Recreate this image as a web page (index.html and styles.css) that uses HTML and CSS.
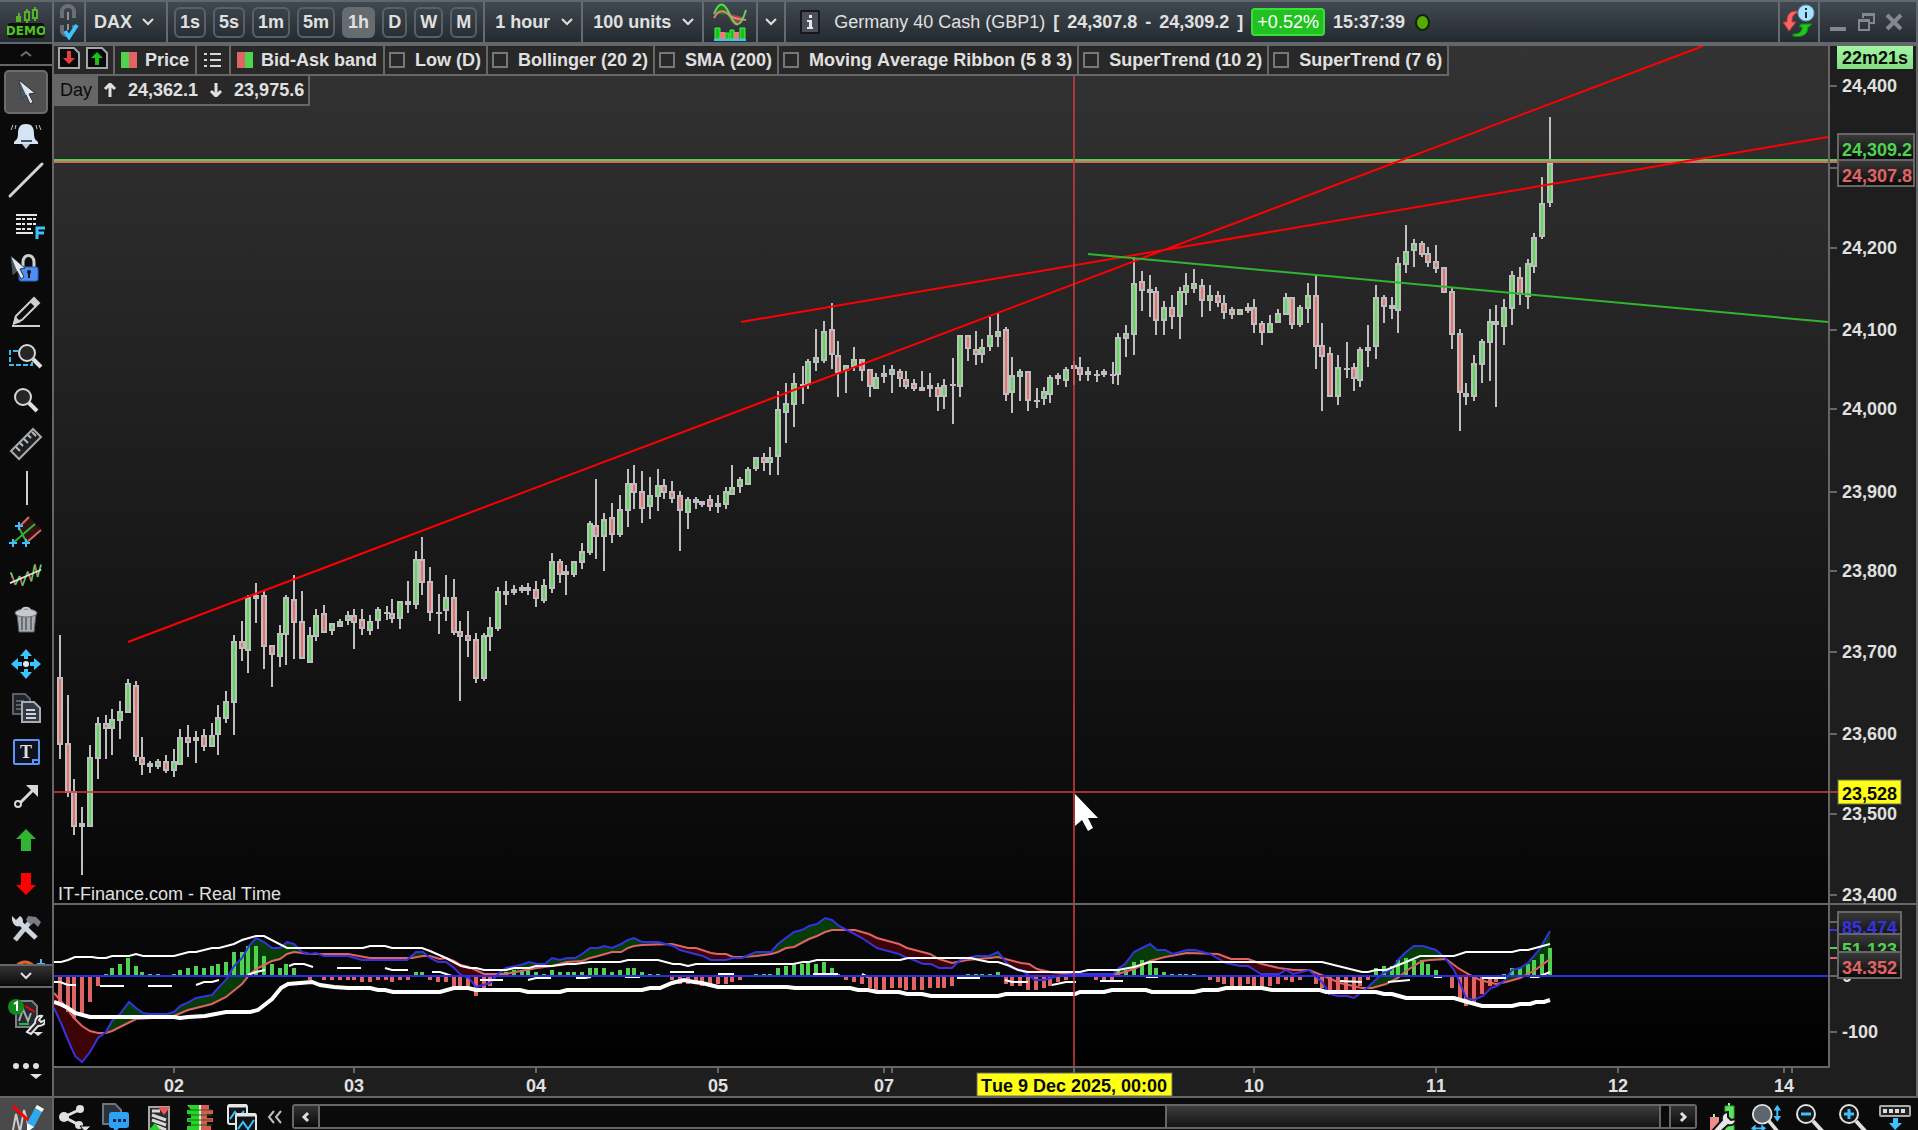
FILE: index.html
```html
<!DOCTYPE html>
<html lang="en">
  <head>
    <meta charset="UTF-8" />
    <meta name="viewport" content="width=device-width, initial-scale=1.0" />
    <title>DAX - 1 hour</title>
    <link rel="stylesheet" href="styles.css" />
  </head>
  <body>
    <!-- top bar -->
    <header class="topbar">
      <div class="cell cell-logo">
        <svg width="38" height="34" viewBox="0 0 38 34">
          <path d="M12 8v9M20 4v14M28 2v14" stroke="#56b22c" stroke-width="2" />
          <path d="M9 11h5v6h-5z" fill="#56b22c" />
          <path d="M18 7h4v8h-4zM26 5h4v8h-4z" fill="#26351c" stroke="#56b22c" stroke-width="2" />
          <rect x="1" y="18" width="36" height="15" rx="2" fill="#0a1406" />
          <text class="logo-text" x="19" y="30" text-anchor="middle">DEMO</text>
        </svg>
      </div>
      <button type="button" class="cell cell-link" aria-label="Link charts">
        <svg width="22" height="36" viewBox="0 0 22 36" fill="none">
          <path d="M4 14V7a6 5 0 0 1 12 0v7M4 21v5a6 5 0 0 0 8 5M16 21v3" stroke="#6a7076" stroke-width="4" />
          <path d="M10 8v8M10 20v6" stroke="#8d9296" stroke-width="2" />
          <path d="M7 27l4 6 8-12" stroke="#3cc3ff" stroke-width="4" />
        </svg>
      </button>
      <button type="button" class="cell cell-symbol">DAX
        <svg class="chevron" width="12" height="8" viewBox="0 0 12 8"><path d="M1 1l5 5 5-5" /></svg>
      </button>
      <div class="cell timeframes">
        <button type="button" class="tf">1s</button>
        <button type="button" class="tf">5s</button>
        <button type="button" class="tf">1m</button>
        <button type="button" class="tf">5m</button>
        <button type="button" class="tf active">1h</button>
        <button type="button" class="tf">D</button>
        <button type="button" class="tf">W</button>
        <button type="button" class="tf">M</button>
      </div>
      <label class="cell cell-select">
        <select aria-label="Timeframe"><option>1 hour</option></select>
        <svg class="chevron" width="12" height="8" viewBox="0 0 12 8"><path d="M1 1l5 5 5-5" /></svg>
      </label>
      <label class="cell cell-select">
        <select aria-label="Units"><option>100 units</option></select>
        <svg class="chevron" width="12" height="8" viewBox="0 0 12 8"><path d="M1 1l5 5 5-5" /></svg>
      </label>
      <button type="button" class="cell cell-indicators" aria-label="Indicators">
        <svg width="34" height="40" viewBox="0 0 34 40" fill="none">
          <path d="M1 14C6-2 10-1 16 9L11 13 1 11z" fill="#1d7a1d" />
          <path d="M14 11l16 4C26 28 20 26 14 11z" fill="#9c4545" />
          <path d="M1 16C6 6 12 9 16 13s10 4 17 5" stroke="#f07b7b" stroke-width="2" />
          <path d="M1 12C6-1 11 0 16 11s10 20 17-3" stroke="#5fd75f" stroke-width="2" />
          <path d="M2 26h5v11H2zM12 31h4v6h-4zM17 28h4v9h-4zM27 26h5v11h-5z" fill="#19c219" stroke="#4df04d" />
          <path d="M7 30h5v7H7zM21 30h5v7h-5z" fill="#f07b7b" />
          <path d="M1 38h32" stroke="#3cc3ff" stroke-width="2" />
        </svg>
      </button>
      <button type="button" class="cell cell-more" aria-label="More indicators">
        <svg class="chevron" width="12" height="8" viewBox="0 0 12 8"><path d="M1 1l5 5 5-5" /></svg>
      </button>
      <div class="cell instrument">
        <svg width="20" height="24" viewBox="0 0 20 24">
          <rect x="1" y="1" width="18" height="22" rx="1" fill="#4b4d59" stroke="#15171a" stroke-width="2" />
          <path d="M9 5h3v3H9zM7 10h5v7h1v2H7v-2h2v-5H7z" fill="#e6e6e6" />
        </svg>
        <span class="name">Germany 40 Cash (GBP1)</span>
        <span class="quote"><span>[</span><span>24,307.8</span><span>-</span><span>24,309.2</span><span>]</span></span>
        <span class="change">+0.52%</span>
        <span class="clock">15:37:39</span>
        <span class="status"></span>
      </div>
      <button type="button" class="cell cell-sync" aria-label="Orders">
        <svg width="34" height="38" viewBox="0 0 34 38">
          <path d="M15 8C7 8 5 12 5 19H1l6 9 7-9h-4c0-5 1-8 5-9z" fill="#ff6464" stroke="#c23a3a" />
          <path d="M19 21h11l-3 3h-1c0 7-5 11-15 9v-2c6 0 9-2 9-7h-3z" fill="#1ec61e" stroke="#118a11" />
          <circle cx="24" cy="10" r="8" fill="#a9e2ff" stroke="#5fa6cc" />
          <path d="M23 5h2v2h-2zM23 9h2v6h-2z" fill="#18303c" />
        </svg>
      </button>
      <div class="cell window-buttons">
        <button type="button" aria-label="Minimize">
          <svg width="18" height="20" viewBox="0 0 18 20"><path d="M1 17h16" stroke-width="4" /></svg>
        </button>
        <button type="button" aria-label="Restore">
          <svg width="18" height="20" viewBox="0 0 18 20"><path d="M6 6V2h11v9h-5M2 8h10v10H2zM2 9h10M6 3h11" stroke-width="2" /></svg>
        </button>
        <button type="button" aria-label="Close">
          <svg width="18" height="20" viewBox="0 0 18 20"><path d="M2 3l14 14M16 3L2 17" stroke-width="4" /></svg>
        </button>
      </div>
    </header>

    <main class="main">
      <!-- drawing tools -->
      <nav class="sidebar">
        <button type="button" class="tools-up" aria-label="Scroll up">
          <svg width="12" height="8" viewBox="0 0 12 8" fill="none"><path d="M1 6l5-4 5 4" stroke="#6e6e6e" stroke-width="2" /></svg>
        </button>
        <div class="tools">
          <button type="button" class="tool selected" aria-label="Pointer">
            <svg viewBox="0 0 32 32"><path d="M9 4l3 19 4-4 4 9 3-2-4-8 6-1z" fill="#dfe6ee" stroke="#27303a" /><path d="M9 4l3 19 4-4z" fill="#4a5560" /></svg>
          </button>
          <button type="button" class="tool" aria-label="Alert">
            <svg viewBox="0 0 32 32"><path d="M16 4c7 0 8 5 8 10s2 6 4 8v2H4v-2c2-2 4-3 4-8s1-10 8-10z" fill="#d5e4f5" /><path d="M12 24h8l-4 5z" fill="#b8c9dc" /><path d="M11 21h11" stroke="#44505c" stroke-width="2" /><path d="M3 5L1 10M6 5L5 9M29 5l2 5M26 5l1 4" stroke="#c4c4c4" /></svg>
          </button>
          <button type="button" class="tool" aria-label="Line">
            <svg viewBox="0 0 32 32"><path d="M0 32L32 0" stroke="#d2d2d2" stroke-width="3" stroke-linecap="round" /></svg>
          </button>
          <button type="button" class="tool" aria-label="Fibonacci">
            <svg viewBox="0 0 32 32"><path d="M6 7h21M6 25h17" stroke="#e6e6e6" stroke-width="2" /><path d="M6 11h21M6 16h21M6 21h15" stroke="#e6e6e6" stroke-width="2" stroke-dasharray="5 1 3 2" /><path d="M27 31V20h8M27 25h7" stroke="#3cc3ff" stroke-width="3" fill="none" /></svg>
          </button>
          <button type="button" class="tool" aria-label="Lock">
            <svg viewBox="0 0 32 32"><path d="M13 16v-6a5 6 0 0 1 11 0v6" fill="none" stroke="#cfcfcf" stroke-width="3" /><rect x="9" y="15" width="19" height="14" rx="2" fill="#4f8df5" stroke="#2b62c4" /><circle cx="19" cy="20" r="2" fill="#111" /><path d="M18 20h2v6h-2z" fill="#111" /><path d="M1 4l2 19 4-4 4 8 3-2-4-8 5-1z" fill="#dfe6ee" stroke="#27303a" /><path d="M1 4l2 19 4-4z" fill="#4a5560" /></svg>
          </button>
          <button type="button" class="tool" aria-label="Draw">
            <svg viewBox="0 0 32 32"><path d="M6 20L24 2l5 5-17 17-8 3z" fill="#0b0b0b" stroke="#cfcfcf" stroke-width="2" /><path d="M24 2l5 5-4 4-5-5zM5 20l6 6-8 3z" fill="#cfcfcf" /><path d="M2 30h28" stroke="#cfcfcf" stroke-width="2" /></svg>
          </button>
          <button type="button" class="tool" aria-label="Zoom area">
            <svg viewBox="0 0 32 32"><path d="M8 11H0v14h22v-4" fill="none" stroke="#3cb9ee" stroke-width="2" stroke-dasharray="5 2" /><path d="M23 19l8 8" stroke="#e0e0e0" stroke-width="4" /><circle cx="17" cy="13" r="8" fill="#262626" stroke="#d8d8d8" stroke-width="2" /></svg>
          </button>
          <button type="button" class="tool" aria-label="Zoom">
            <svg viewBox="0 0 32 32"><path d="M19 19l8 8" stroke="#e0e0e0" stroke-width="4" /><circle cx="13" cy="13" r="8" fill="#262626" stroke="#d8d8d8" stroke-width="2" /></svg>
          </button>
          <button type="button" class="tool" aria-label="Ruler">
            <svg viewBox="0 0 32 32"><path d="M1 23L23 1l8 8L9 31z" fill="#1b1f23" stroke="#aaa" stroke-width="2" /><path d="M6 19l4 4M10 15l3 3M14 11l4 4M18 7l3 3M22 4l4 4" stroke="#bbb" stroke-width="2" /></svg>
          </button>
          <button type="button" class="tool" aria-label="Vertical line">
            <svg viewBox="0 0 32 32"><path d="M17-1v34" stroke="#cfcfcf" stroke-width="2" /></svg>
          </button>
          <button type="button" class="tool" aria-label="Channel">
            <svg viewBox="0 0 32 32"><path d="M8 10L19 1l12 12-15 14z" fill="#301212" /><path d="M9 11L19 1M16 27l15-13" stroke="#e06464" stroke-width="2" /><path d="M3 27L25 8M9 12l8 15" stroke="#2fb52f" stroke-width="2" /><path d="M9 6v8M5 10h8M3 23v8M-1 27h8M16 23v8M12 27h8" stroke="#3cc3ff" stroke-width="2" /></svg>
          </button>
          <button type="button" class="tool" aria-label="Regression">
            <svg viewBox="0 0 36 36" fill="none"><path d="M1 14l5 14M11 18l3 11M20 13l4 11M28 5l3 14" stroke="#e06464" stroke-width="2" /><path d="M1 14l2 6M6 28l5-10M14 29l6-16M24 24l4-19M31 19l4-14" stroke="#4fd24f" stroke-width="2" /><path d="M0 26L35 11" stroke="#dedede" stroke-width="2" /></svg>
          </button>
          <button type="button" class="tool" aria-label="Delete">
            <svg viewBox="0 0 32 32"><path d="M7 10h19l-2 18H9z" fill="#a9adb2" stroke="#5a5e63" /><path d="M12 12v14M16 12v14M21 12v14" stroke="#6b7075" stroke-width="2" /><ellipse cx="16" cy="9" rx="11" ry="4" fill="#c6c9cd" stroke="#6b7075" /><path d="M12 6c1-3 7-3 8 0" fill="none" stroke="#c6c9cd" stroke-width="2" /></svg>
          </button>
          <button type="button" class="tool" aria-label="Move">
            <svg viewBox="0 0 32 32"><path d="M16 1l6 7h-4v3h-4V8h-4zM16 31l6-7h-4v-3h-4v3h-4zM1 16l7-6v4h4v4H8v4zM31 16l-7-6v4h-4v4h4v4z" fill="#3cc3ff" /><circle cx="16" cy="16" r="3" fill="#e6e6e6" /></svg>
          </button>
          <button type="button" class="tool" aria-label="Copy">
            <svg viewBox="0 0 32 32"><path d="M3 2h12l5 5v15H3z" fill="#20242a" stroke="#5b6066" stroke-width="2" /><path d="M6 9h8M6 13h5M6 17h5" stroke="#5b6066" stroke-width="2" /><path d="M12 10h12l6 6v14H12z" fill="#343b44" stroke="#a6adb5" stroke-width="2" /><path d="M16 18h9M16 22h10M16 26h10" stroke="#d0d4d8" stroke-width="2" /></svg>
          </button>
          <button type="button" class="tool" aria-label="Text">
            <svg viewBox="0 0 32 32"><rect x="4" y="4" width="25" height="24" rx="1" fill="#0d1220" stroke="#5f93f5" stroke-width="2" /><path d="M23 28v-4h5" fill="none" stroke="#5f93f5" stroke-width="2" /><text class="icon-t" x="16" y="22" text-anchor="middle">T</text></svg>
          </button>
          <button type="button" class="tool" aria-label="Arrow line">
            <svg viewBox="0 0 32 32"><path d="M10 23L24 9" stroke="#d8d8d8" stroke-width="3" /><path d="M16 5h12v12z" fill="#d8d8d8" /><circle cx="8" cy="24" r="3" fill="none" stroke="#d8d8d8" stroke-width="2" /></svg>
          </button>
          <button type="button" class="tool" aria-label="Up arrow">
            <svg viewBox="0 0 32 32"><path d="M16 5l10 10h-5v12H11V15H6z" fill="#2fb52f" /></svg>
          </button>
          <button type="button" class="tool" aria-label="Down arrow">
            <svg viewBox="0 0 32 32"><path d="M16 27l10-10h-5V5H11v12H6z" fill="#f00" /></svg>
          </button>
          <button type="button" class="tool" aria-label="Settings">
            <svg viewBox="0 0 32 32"><path d="M20 10L5 28" stroke="#c9ccd0" stroke-width="5" /><path d="M18 4l8 1 5 5-3 5-4-4-3 2-5-5z" fill="#787e84" /><path d="M8 9l18 17" stroke="#cfd8e2" stroke-width="5" /><path d="M2 4l4 4 4-4c4 2 4 8 0 10S1 11 2 4z" fill="#cfd8e2" /></svg>
          </button>
          <button type="button" class="tool" aria-label="Cycle">
            <svg viewBox="0 0 32 32" fill="none"><circle cx="15" cy="17" r="11" stroke="#e0662e" stroke-width="3" /><path d="M31 3v10M27 8h8" stroke="#3cc3ff" stroke-width="2" /></svg>
          </button>
        </div>
        <button type="button" class="tools-down" aria-label="Scroll down">
          <svg class="chevron" width="12" height="8" viewBox="0 0 12 8"><path d="M1 1l5 5 5-5" /></svg>
        </button>
        <button type="button" class="side-extra" aria-label="Templates">
          <svg width="38" height="38" viewBox="0 0 38 38"><path d="M9 3h16l5 5v21H9z" fill="#242a31" stroke="#7b8188" stroke-width="2" /><path d="M12 23l4-12 5 12 3-8" fill="none" stroke="#aaa" stroke-width="2" /><path d="M18 8l10 6" stroke="#f00" stroke-width="2" /><path d="M12 26h10" stroke="#2fb52f" stroke-width="2" /><path d="M20 34l8-9c0-5 3-8 7-7l-3 4 2 2 4-2c1 4-3 6-7 6l-7 8z" fill="#222" stroke="#e6e6e6" stroke-width="2" /><circle cx="9" cy="9" r="8" fill="#11891b" /><path d="M7 6l3-2v9" fill="none" stroke="#fff" stroke-width="2" /><path d="M26 34h10l-5 4z" fill="#e0e0e0" /></svg>
        </button>
        <button type="button" class="side-extra side-dots" aria-label="More tools">
          <svg width="32" height="20" viewBox="0 0 32 20" fill="#e0e0e0"><circle cx="6" cy="5" r="3" /><circle cx="16" cy="5" r="3" /><circle cx="26" cy="5" r="3" /><path d="M20 13h12l-6 5z" /></svg>
        </button>
      </nav>

      <!-- chart -->
      <section class="chart-panel">
        <div class="legend">
          <div class="chips">
            <div class="chip chip-orders">
              <button type="button" aria-label="Sell">
                <svg width="22" height="22" viewBox="0 0 22 22"><path d="M1 1h15l5 5v15H1z" fill="#0a0a0a" stroke="#a2a7ad" stroke-width="2" /><path d="M9 4h4v7h4l-6 6-6-6h4z" fill="#ee3b3b" /></svg>
              </button>
              <button type="button" aria-label="Buy">
                <svg width="22" height="22" viewBox="0 0 22 22"><path d="M1 1h15l5 5v15H1z" fill="#0a0a0a" stroke="#a2a7ad" stroke-width="2" /><path d="M9 18h4v-7h4l-6-6-6 6h4z" fill="#19c219" /></svg>
              </button>
            </div>
            <div class="chip"><span class="swatch"></span>Price</div>
            <button type="button" class="chip" aria-label="List">
              <svg width="20" height="16" viewBox="0 0 20 16"><path d="M1 2h3M1 8h3M1 14h3M7 2h11M7 8h11M7 14h11" stroke="#d8d8d8" stroke-width="2" /></svg>
            </button>
            <div class="chip"><span class="swatch swatch-reverse"></span>Bid-Ask band</div>
            <label class="chip chip-check"><input type="checkbox" />Low (D)</label>
            <label class="chip chip-check"><input type="checkbox" />Bollinger (20 2)</label>
            <label class="chip chip-check"><input type="checkbox" />SMA (200)</label>
            <label class="chip chip-check"><input type="checkbox" />Moving Average Ribbon (5 8 3)</label>
            <label class="chip chip-check"><input type="checkbox" />SuperTrend (10 2)</label>
            <label class="chip chip-check"><input type="checkbox" />SuperTrend (7 6)</label>
          </div>
          <div class="day-range">
            <span class="day">Day</span>
            <svg width="14" height="14" viewBox="0 0 14 14" fill="none"><path d="M7 14V2M2 6l5-5 5 5" /></svg>
            <span>24,362.1</span>
            <svg width="14" height="14" viewBox="0 0 14 14" fill="none"><path d="M7 0v12M2 8l5 5 5-5" /></svg>
            <span>23,975.6</span>
          </div>
        </div>

        <svg class="chart" viewBox="54 46 1862 1050" preserveAspectRatio="none">
          <defs>
            <linearGradient id="price-bg" x1="0" y1="0" x2="0" y2="1"><stop offset="0" stop-color="#333" /><stop offset="1" stop-color="#060606" /></linearGradient>
            <linearGradient id="macd-bg" x1="0" y1="0" x2="0" y2="1"><stop offset="0" stop-color="#0a0a0a" /><stop offset="1" stop-color="#000" /></linearGradient>
            <linearGradient id="tag-bg" x1="0" y1="0" x2="0" y2="1"><stop offset="0" stop-color="#3a3a3a" /><stop offset="1" stop-color="#080808" /></linearGradient>
            <linearGradient id="timer-bg" x1="0" y1="0" x2="0" y2="1"><stop offset="0" stop-color="#a2f8a2" /><stop offset="1" stop-color="#82dc82" /></linearGradient>
            <clipPath id="tag-1"><rect x="1836" y="910" width="68" height="23" /></clipPath>
            <clipPath id="tag-2"><rect x="1836" y="933" width="68" height="18" /></clipPath>
          </defs>

          <rect x="54" y="46" width="1862" height="1050" fill="#1e1e1e" />
          <rect x="54" y="46" width="1774" height="857" fill="url(#price-bg)" />
          <rect x="54" y="905" width="1774" height="161" fill="url(#macd-bg)" />

          <g id="candles" shape-rendering="crispEdges"></g>

          <!-- bid / ask -->
          <path class="ask" d="M54 160H1838" />
          <path class="bid" d="M54 162H1838" />

          <!-- trend lines -->
          <path class="trend" d="M128 642L1703 46M741 322L1828 137" />
          <path class="trend trend-green" d="M1088 254L1828 322" />

          <text class="credit" x="58" y="900">IT-Finance.com - Real Time</text>

          <g id="macd"></g>

          <!-- crosshair -->
          <path class="crosshair" d="M54 792H1838M1074 76V1066" />

          <!-- frames -->
          <path class="frame" d="M54 904H1916M54 1067H1830M1829 46V1067" />
          <g id="axis"></g>

          <!-- value tags -->
          <rect x="1837" y="46" width="76" height="23" fill="url(#timer-bg)" />
          <text class="tag dark" x="1842" y="64">22m21s</text>
          <rect class="tag-box" x="1838" y="134" width="76" height="26" />
          <text class="tag ask-text" x="1842" y="156">24,309.2</text>
          <rect class="tag-box" x="1838" y="160" width="76" height="26" />
          <text class="tag bid-text" x="1842" y="182">24,307.8</text>
          <rect class="tag-yellow" x="1838" y="780" width="63" height="24" />
          <text class="tag dark" x="1842" y="800">23,528</text>

          <g clip-path="url(#tag-1)">
            <rect class="tag-box" x="1838" y="912" width="63" height="28" />
            <text class="tag macd-text" x="1842" y="934">85.474</text>
          </g>
          <g clip-path="url(#tag-2)">
            <rect class="tag-box" x="1838" y="934" width="63" height="28" />
            <text class="tag ask-text" x="1842" y="956">51.123</text>
          </g>
          <rect class="tag-box" x="1838" y="952" width="63" height="26" />
          <text class="tag bid-text" x="1842" y="974">34.352</text>

          <rect class="tag-yellow" x="977" y="1073" width="195" height="23" />
          <text class="tag dark" x="1074" y="1092" text-anchor="middle">Tue 9 Dec 2025, 00:00</text>

          <path d="M1075 794v32l7-6 6 11 5-3-5-10h10z" fill="#fff" />
        </svg>
      </section>
    </main>

    <!-- bottom bar -->
    <footer class="bottombar">
      <button type="button" class="draw-mode" aria-label="Drawing mode">
        <svg viewBox="0 0 32 32"><path d="M3 28l3-16 4 18 4-22 4 14" fill="none" stroke="#ccc" stroke-width="2" /><path d="M3 4l18 17" stroke="#f00" stroke-width="3" /><path d="M3 30h12" stroke="#2fb52f" stroke-width="2" /><path d="M17 21l8-15 7 4-8 15-7 5z" fill="#2fa8ee" /><path d="M25 6l2-3 7 4-2 3zM17 21l7 4-7 5z" fill="#fff" /></svg>
      </button>
      <div class="bottom-tools">
        <button type="button" aria-label="Share">
          <svg viewBox="0 0 32 32"><path d="M23 7L6 15l17 9" fill="none" stroke="#e0e0e0" stroke-width="3" /><circle cx="22" cy="7" r="4" fill="#e0e0e0" /><circle cx="6" cy="15" r="5" fill="#e0e0e0" /><circle cx="21" cy="23" r="4" fill="#e0e0e0" /><path d="M22 24h11l-6 6z" fill="#e0e0e0" stroke="#0a0a0a" /></svg>
        </button>
        <button type="button" aria-label="Chat">
          <svg viewBox="0 0 32 32"><path d="M3 2h12l6 6v14H3z" fill="#2b323a" stroke="#6d747b" stroke-width="2" /><rect x="9" y="10" width="20" height="16" rx="3" fill="#2fa0f5" /><path d="M13 25h7l-5 5z" fill="#2fa0f5" /><path d="M13 17h3v3h-3zM18 17h3v3h-3zM23 17h3v3h-3z" fill="#0b2a44" /></svg>
        </button>
        <button type="button" aria-label="Order list">
          <svg viewBox="0 0 32 32"><rect x="7" y="5" width="20" height="26" fill="#2b2b2b" stroke="#a6a6a6" stroke-width="2" /><path d="M10 9h8M10 13l14 5M10 18l14 5M14 24l10 4" stroke="#d8d8d8" stroke-width="3" /><path d="M16 5h12l-6 8z" fill="#ee5a5a" /><path d="M6 29l7-8 6 8z" fill="#2bd12b" /></svg>
        </button>
        <button type="button" aria-label="Order book">
          <svg viewBox="0 0 32 32"><path d="M3 3h14v26H3v-5h4v-4H3v-4h4v-4H3V8h4z" fill="#2bd12b" /><path d="M17 3h8v5h4v4h-6v4h6v4h-6v4h4v5H17z" fill="#e25555" /><path d="M16 3v26" stroke="#d9f5d9" stroke-width="2" /><path d="M4 8h24M4 13h24M4 18h24M4 23h24" stroke="#147014" /></svg>
        </button>
        <button type="button" aria-label="Windows">
          <svg viewBox="0 0 32 32"><rect x="2" y="3" width="19" height="19" rx="2" fill="#10151a" stroke="#e6e6e6" stroke-width="2" /><path d="M2 4h19" stroke="#e6e6e6" stroke-width="3" /><path d="M4 17l5-7 4 5 5-6" fill="none" stroke="#3cc3ff" stroke-width="2" /><rect x="10" y="12" width="20" height="18" rx="2" fill="#10151a" stroke="#e6e6e6" stroke-width="2" /><path d="M10 13h20" stroke="#e6e6e6" stroke-width="3" /><path d="M12 27l5-7 5 7 6-9" fill="none" stroke="#3cc3ff" stroke-width="2" /></svg>
        </button>
      </div>
      <button type="button" class="collapse" aria-label="Collapse">
        <svg width="14" height="14" viewBox="0 0 14 14" fill="none"><path d="M6 1L1 7l5 6M13 1L8 7l5 6" stroke="#bdbdbd" stroke-width="2" /></svg>
      </button>
      <div class="scrollbar">
        <button type="button" class="scroll-left" aria-label="Scroll left">
          <svg width="8" height="12" viewBox="0 0 8 12"><path d="M6 2L2 6l4 4" /></svg>
        </button>
        <div class="track"><div class="thumb"></div></div>
        <button type="button" class="scroll-right" aria-label="Scroll right">
          <svg width="8" height="12" viewBox="0 0 8 12"><path d="M2 2l4 4-4 4" /></svg>
        </button>
      </div>
      <div class="zoom-tools">
        <button type="button" aria-label="Chart settings">
          <svg viewBox="0 0 32 32"><path d="M7 12v18M22 1v30" stroke="#8f8" stroke-width="2" /><path d="M3 15h9v16H3z" fill="#f28b8b" /><path d="M18 4h9v25h-9z" fill="#5fe35f" stroke="#2fae2f" /><path d="M5 29l10-11c-1-5 2-8 6-8v5l3 3 5-1c0 5-4 7-8 6L10 33z" fill="#e6e6e6" stroke="#111" stroke-width="2" /></svg>
        </button>
        <button type="button" aria-label="Auto scale">
          <svg viewBox="0 0 34 32"><path d="M20 19l9 11" stroke="#e0e0e0" stroke-width="4" /><circle cx="13" cy="12" r="10" fill="#5d666e" stroke="#e0e0e0" stroke-width="2" /><path d="M29 2l4 6h-3v6h3l-4 6-4-6h3V8h-3zM1 27l5-4v3h6v-3l5 4-5 4v-3H6v3z" fill="#3cc3ff" /></svg>
        </button>
        <button type="button" aria-label="Zoom out">
          <svg viewBox="0 0 32 32"><path d="M20 19l10 11" stroke="#e0e0e0" stroke-width="4" /><circle cx="13" cy="12" r="9" fill="#151515" stroke="#e0e0e0" stroke-width="2" /><path d="M8 12h10" stroke="#3cc3ff" stroke-width="3" /></svg>
        </button>
        <button type="button" aria-label="Zoom in">
          <svg viewBox="0 0 32 32"><path d="M20 19l10 11" stroke="#e0e0e0" stroke-width="4" /><circle cx="13" cy="12" r="9" fill="#151515" stroke="#e0e0e0" stroke-width="2" /><path d="M8 12h10M13 7v10" stroke="#3cc3ff" stroke-width="3" /></svg>
        </button>
        <button type="button" aria-label="Fit units">
          <svg viewBox="0 0 32 32"><rect x="1" y="4" width="30" height="10" rx="1" fill="#222" stroke="#aaa" stroke-width="2" /><path d="M4 9h24" stroke="#ddd" stroke-width="4" stroke-dasharray="4 2" /><path d="M14 16h5v5h4l-7 7-6-7h4z" fill="#3cc3ff" /></svg>
        </button>
      </div>
    </footer>

    <script src="chart.js"></script>
  </body>
</html>
```

FILE: styles.css
```css
* {
  box-sizing: border-box;
}
body {
  margin: 0;
  height: 100vh;
  display: flex;
  flex-direction: column;
  overflow: hidden;
  background: #0a0a0a;
  color: #e0e0e0;
  font: bold 18px/20px "Liberation Sans", Arial, sans-serif;
  font-kerning: none;
}
button,
select {
  margin: 0;
  padding: 0;
  border: 0;
  background: none;
  color: inherit;
  font: inherit;
  font-kerning: none;
}
select {
  appearance: none;
}
svg {
  display: block;
  flex: none;
}
.chevron path {
  fill: none;
  stroke: #e0e0e0;
  stroke-width: 2;
}

/* top bar */
.topbar {
  display: flex;
  flex: none;
  height: 44px;
  border: 2px solid #60676e;
  border-left: 0;
  background: linear-gradient(#414950, #232a30);
}
.cell {
  display: flex;
  align-items: center;
  justify-content: center;
  border-right: 2px solid #646b71;
}
.cell-logo {
  width: 54px;
}
.logo-text {
  font: bold 12px "DejaVu Sans", sans-serif;
  fill: #56c22c;
}
.cell-link {
  width: 32px;
}
.cell-symbol {
  gap: 10px;
  padding: 0 12px 0 8px;
}
.timeframes {
  gap: 7px;
  padding: 0 6px;
}
.tf {
  height: 31px;
  padding: 0 4px;
  border: 2px solid #5a6066;
  border-radius: 6px;
}
.tf.active {
  background: #666b6f;
  border-color: #666b6f;
}
.cell-select {
  gap: 10px;
  padding: 0 8px 0 10px;
}
.cell-indicators {
  width: 54px;
}
.cell-more {
  width: 28px;
}
.instrument {
  flex: 1;
  justify-content: flex-start;
  padding-left: 14px;
}
.name {
  margin: 0 8px 0 14px;
  font-weight: normal;
}
.quote {
  display: flex;
  gap: 8px;
}
.change {
  margin: 0 8px;
  padding: 4px;
  border: 2px solid #3bdc3b;
  border-radius: 4px;
  background: #22c122;
  color: #fff;
  font-weight: normal;
  line-height: 16px;
}
.status {
  width: 15px;
  height: 17px;
  margin-left: 10px;
  border: 2px solid #14200a;
  border-radius: 50%;
  background: #57ab00;
}
.cell-sync {
  width: 40px;
}
.window-buttons {
  width: 96px;
  gap: 10px;
  padding-right: 4px;
  border-right: 0;
}
.window-buttons path {
  fill: none;
  stroke: #82888d;
}

/* tools on the left */
.main {
  display: flex;
  flex: 1;
  min-height: 0;
  border-bottom: 2px solid #666;
}
.sidebar {
  display: flex;
  flex-direction: column;
  flex: none;
  width: 54px;
  border-right: 2px solid #666;
}
.tools-up,
.tools-down {
  display: flex;
  align-items: center;
  justify-content: center;
  flex: none;
  height: 22px;
  border-bottom: 2px solid #666;
}
.tools-down {
  height: 24px;
  border-top: 2px solid #666;
  background: linear-gradient(#333, #0a0a0a);
}
.tools {
  flex: 1;
  min-height: 0;
  padding: 4px;
  overflow: hidden;
}
.tool {
  display: flex;
  align-items: center;
  justify-content: center;
  width: 44px;
  height: 44px;
}
.tool svg {
  width: 32px;
  height: 32px;
  overflow: visible;
}
.tool.selected {
  border: 2px solid #6c6c6c;
  border-radius: 5px;
  background: #505050;
}
.icon-t {
  font: bold 18px "Liberation Serif", serif;
  fill: #ddd;
}
.side-extra {
  display: flex;
  align-items: center;
  justify-content: center;
  flex: none;
  height: 58px;
}
.side-dots {
  height: 50px;
}

/* chart */
.chart-panel {
  position: relative;
  flex: 1;
  min-width: 0;
  border: solid #666;
  border-width: 2px 2px 0 0;
}
.chart {
  width: 100%;
  height: 100%;
}
.legend {
  position: absolute;
  top: 0;
  left: 0;
}
.chips,
.day-range {
  display: flex;
  width: max-content;
  height: 30px;
  border-bottom: 2px solid #666;
  background: #282828;
}
.chip {
  display: flex;
  align-items: center;
  gap: 8px;
  padding: 0 6px;
  border-right: 2px solid #666;
}
.chip-orders {
  gap: 6px;
  padding: 0 5px 4px 4px;
}
.chip-check {
  gap: 10px;
  padding: 0 5px 0 4px;
}
.chip input {
  appearance: none;
  width: 16px;
  height: 16px;
  margin: 0;
  border: 2px solid #777;
}
.swatch {
  width: 16px;
  height: 16px;
  background: linear-gradient(to right, #4fd24f 50%, #e06464 50%);
}
.swatch-reverse {
  background: linear-gradient(to right, #e06464 50%, #4fd24f 50%);
}
.day-range {
  align-items: center;
  gap: 11px;
  padding-right: 4px;
  border-right: 2px solid #666;
}
.day-range svg path {
  stroke: #e0e0e0;
  stroke-width: 3;
}
.day {
  margin-right: -6px;
  padding: 4px 6px;
  background: #666;
  color: #0a0a0a;
  font-weight: normal;
}

.chart text {
  fill: #e0e0e0;
}
.chart .credit {
  font-weight: normal;
}
.chart .dark {
  fill: #0a0a0a;
}
.chart .ask-text {
  fill: #4fd24f;
}
.chart .bid-text {
  fill: #e06464;
}
.chart .macd-text {
  fill: #3333e0;
}
.ask,
.bid,
.crosshair,
.frame,
.zero {
  stroke-width: 2;
  shape-rendering: crispEdges;
}
.ask {
  stroke: #4fd24f;
}
.bid {
  stroke: #e06464;
}
.crosshair {
  stroke: #c83c3c;
  stroke-opacity: 0.8;
}
.frame {
  fill: none;
  stroke: #666;
}
.zero {
  stroke: #2c2ce0;
}
.trend {
  fill: none;
  stroke: #f00;
  stroke-width: 2;
}
.trend-green {
  stroke: #2fb52f;
}
.tag-box {
  fill: url(#tag-bg);
  stroke: #666;
  stroke-width: 2;
}
.tag-yellow {
  fill: #ffff14;
  stroke: #666;
}
.macd-line,
.signal-line,
.band,
.band-low {
  fill: none;
  stroke: #fff;
  stroke-width: 2;
}
.macd-line {
  stroke: #3333e0;
}
.signal-line {
  stroke: #e06464;
}
.band-low {
  stroke-width: 4;
}

/* bottom bar */
.bottombar {
  display: flex;
  flex: none;
  height: 32px;
  overflow: hidden;
}
.draw-mode {
  width: 54px;
  border-right: 2px solid #666;
  background: #4a4a4a;
}
.bottombar svg {
  overflow: visible;
}
.draw-mode svg,
.bottom-tools svg,
.zoom-tools svg {
  width: 32px;
  height: 32px;
}
.draw-mode svg {
  margin: 4px auto 0;
}
.bottom-tools,
.zoom-tools {
  display: flex;
  gap: 10px;
  padding: 4px 0 0 4px;
}
.zoom-tools {
  gap: 11px;
  padding: 4px 7px 0 10px;
}
.collapse {
  width: 34px;
  padding: 6px 0 0 10px;
}
.scrollbar {
  display: flex;
  flex: 1;
  height: 25px;
  margin-top: 6px;
  border: 2px solid #666;
  border-radius: 3px;
}
.scrollbar button {
  display: flex;
  align-items: center;
  justify-content: center;
  width: 26px;
  background: linear-gradient(#333, #0a0a0a);
}
.scrollbar path {
  fill: none;
  stroke: #e0e0e0;
  stroke-width: 3;
}
.scroll-left {
  border-right: 2px solid #666;
}
.track {
  display: flex;
  flex: 1;
  justify-content: flex-end;
  padding-right: 8px;
}
.thumb {
  width: 37%;
  border: solid #666;
  border-width: 0 2px;
  background: linear-gradient(#3c3c3c, #141414);
}
.scroll-right {
  border-left: 2px solid #666;
}
```

FILE: chart.js
```js
const SVG_NS = "http://www.w3.org/2000/svg";

// x, high, body top, body bottom, low, colour (g = up, r = down, n = flat)
const candles = `
60 635 677 745 759 r;68 695 743 793 797 r;74 779 791 827 835 r;82 807 823 827 875 n;90 745 757 827 827 g
98 717 723 759 779 g;106 715 723 729 759 r;112 709 719 729 755 g;120 701 711 721 739 g;128 679 683 713 713 g
136 681 685 757 761 r;142 737 757 765 775 r;150 761 763 767 773 n;158 759 761 767 769 g;166 755 761 771 773 r
174 749 761 771 777 g;180 729 737 765 765 g;188 725 737 743 757 r;196 731 737 741 763 n;204 729 735 747 751 r
212 723 735 747 747 g;218 705 717 735 755 g;226 691 701 719 723 g;234 635 641 703 735 g;242 621 641 649 661 r
248 595 597 651 673 g;256 583 595 599 623 n;264 591 595 647 669 r;272 645 645 655 687 r;280 625 633 657 667 g
286 595 597 635 665 g;294 575 599 623 659 r;302 591 621 659 659 r;310 627 635 663 663 g;316 609 615 637 641 g
324 605 613 633 633 r;332 623 623 631 635 g;340 619 621 627 627 g;348 611 615 621 625 g;354 609 615 623 649 r
362 609 619 629 635 r;370 615 621 631 635 g;378 607 609 621 629 g;387 606 612 614 620 n;392 599 613 619 623 r
400 601 601 619 629 g;408 581 601 605 613 n;416 551 559 605 609 g;422 537 559 583 595 r;430 567 581 613 621 r
439 594 612 614 634 n;446 575 597 611 621 g;454 579 597 633 635 r;460 621 631 637 701 r;468 611 635 641 657 r
476 633 639 679 683 r;484 633 635 679 681 g;490 617 627 637 651 g;498 587 591 629 631 g;506 581 591 595 605 n
514 585 589 593 595 n;522 585 587 591 593 n;528 583 587 591 595 n;536 581 589 599 607 r;544 579 585 601 603 g
552 553 561 589 593 g;560 559 561 575 583 r;566 565 571 575 595 n;574 561 561 575 577 g;582 543 551 563 569 g
590 521 523 553 555 g;596 479 525 537 559 r;604 513 519 537 571 g;612 503 517 535 543 r;620 495 509 535 537 g
628 469 483 511 527 g;634 465 483 493 509 r;642 471 491 509 523 r;650 477 495 507 519 g;658 469 485 497 511 g
664 479 485 493 499 r;672 481 491 499 503 r;680 491 495 511 551 r;688 497 499 513 529 g;696 497 499 503 509 n
702 501 501 505 507 n;710 495 499 507 511 r;718 495 503 507 513 n;726 487 491 505 509 g;732 465 487 495 495 g
740 477 479 487 493 g;748 467 469 485 485 g;756 457 457 469 471 g;764 453 457 463 471 r;770 447 457 463 475 g
778 391 409 457 475 g;786 383 403 413 443 g;794 373 383 405 427 g;803 366 384 386 404 n;808 359 361 385 389 g
816 329 357 363 371 g;824 321 331 361 363 g;832 303 329 355 369 r;838 341 355 373 397 r;846 365 365 371 393 g
854 347 359 367 371 g;862 359 359 371 381 r;870 369 369 387 397 r;876 373 377 389 389 g;884 365 373 377 383 n
892 365 369 375 393 g;900 369 371 379 387 r;906 371 379 387 389 r;914 379 383 389 391 r;922 371 387 391 391 n
930 373 385 389 397 n;938 383 387 397 411 r;944 379 385 397 409 g;953 358 384 386 424 n;960 335 335 387 397 g
968 335 335 349 361 r;976 331 349 355 365 r;982 339 347 355 363 g;990 317 335 347 351 g;998 313 331 337 347 g
1006 327 329 395 401 r;1012 357 375 393 413 g;1020 369 371 377 401 g;1028 371 371 401 411 r;1037 388 400 402 408 n
1044 387 391 399 405 g;1050 375 377 395 403 g;1058 373 375 379 385 n;1066 367 369 381 387 g;1074 361 365 369 385 n
1080 357 367 375 381 r;1088 367 371 375 381 n;1097 370 374 376 382 n;1104 369 371 375 377 n;1113 362 374 376 384 n
1118 333 337 375 385 g;1126 325 333 339 357 g;1134 257 283 335 355 g;1142 271 281 291 311 r;1150 275 289 293 317 n
1156 287 291 321 335 r;1164 301 307 321 335 g;1172 295 307 317 329 r;1180 287 291 317 339 g;1186 273 285 293 305 g
1194 269 283 289 293 g;1202 279 285 301 317 r;1210 285 295 301 311 g;1218 291 295 303 307 r;1224 295 303 313 319 r
1232 307 309 315 319 r;1240 309 309 315 315 g;1248 303 307 311 313 n;1254 299 307 325 333 r;1262 321 323 333 345 r
1270 315 323 333 333 g;1278 309 313 323 323 g;1286 293 297 315 315 g;1292 297 297 325 329 r;1300 305 307 325 327 g
1308 283 295 309 323 g;1316 275 295 347 369 r;1322 323 345 357 411 r;1330 347 353 397 397 r;1338 355 367 397 405 g
1347 342 368 370 378 n;1354 363 367 379 391 r;1360 347 349 381 387 g;1368 325 347 351 367 n;1376 285 297 347 359 g
1384 295 297 307 323 r;1392 297 305 309 319 n;1398 257 263 311 333 g;1406 225 251 265 273 g;1414 239 243 251 267 g
1422 241 243 255 257 r;1428 247 253 263 267 r;1436 245 261 269 273 r;1444 267 267 293 293 r;1452 287 291 335 349 r
1460 329 333 393 431 r;1466 383 393 397 405 n;1474 355 363 397 401 g;1482 339 341 365 383 g;1490 309 321 343 381 g
1496 305 321 325 407 n;1504 299 307 327 345 g;1512 271 275 309 325 g;1520 267 277 295 305 r;1528 259 263 297 309 g
1534 233 237 267 273 g;1542 177 203 237 239 g;1550 117 163 203 207 g`;

// x, end of the bar
const histogram = `60 1003,68 1012,74 1018,82 1013,90 1002,98 986,106 974,112 968,120 964,128 958,136 966,142 972,150 974,158 974,174 974,180 970,188 968,196 966,204 968,212 966,218 964,226 962,234 952,242 952,248 946,256 946,264 956,272 964,280 968,286 964,294 968,310 980,324 980,332 980,340 980,348 980,354 980,362 982,370 982,378 980,386 980,392 982,400 980,408 980,416 972,422 972,430 980,438 982,446 982,454 987,460 987,468 987,476 996,484 990,490 986,506 972,514 970,522 970,528 970,536 972,544 974,552 970,560 972,568 972,574 972,582 972,590 968,596 968,604 968,612 972,620 970,628 968,634 968,642 972,650 974,658 974,672 980,680 984,688 984,696 982,702 986,710 986,718 984,726 984,732 982,740 980,756 974,764 974,770 974,778 968,786 966,794 964,802 964,808 963,816 964,824 962,832 968,838 974,846 980,854 982,862 984,870 988,876 990,884 990,892 988,900 988,906 990,914 990,922 990,930 988,938 988,944 988,952 986,968 974,976 974,982 974,990 974,998 972,1006 984,1012 986,1020 986,1028 990,1036 990,1044 988,1050 986,1058 982,1066 980,1096 980,1104 982,1112 980,1118 970,1126 970,1134 962,1142 960,1150 962,1156 968,1164 972,1172 974,1180 974,1186 974,1194 974,1210 980,1218 982,1224 984,1232 986,1240 986,1248 984,1254 986,1262 987,1270 986,1278 984,1286 980,1292 982,1300 980,1316 984,1322 988,1330 995,1338 991,1346 990,1354 990,1360 986,1368 980,1376 968,1384 966,1392 966,1398 960,1406 958,1414 960,1422 960,1428 964,1436 970,1452 988,1460 1000,1466 1006,1474 1002,1482 994,1490 986,1496 982,1504 974,1512 968,1520 968,1528 964,1534 960,1542 954,1550 948`;

const macdLine = `54,1008 61,1023 68,1040 75,1056 82,1062 90,1052 98,1038 106,1032 112,1021 120,1014 129,1002 136,1008 143,1013 150,1014 167,1014 174,1012 180,1006 189,1002 196,998 212,995 219,987 226,980 234,966 242,958 249,946 256,938 264,942 272,948 280,948 287,942 294,944 302,952 310,954 316,953 324,956 348,956 362,960 407,960 416,952 423,952 430,958 438,962 446,962 454,968 461,975 469,978 476,987 490,983 499,973 506,968 521,965 529,962 537,964 545,964 552,958 560,960 567,958 575,958 582,954 590,948 598,948 604,946 612,948 621,944 628,940 634,938 642,942 658,942 666,944 673,946 680,950 695,954 703,956 711,960 726,960 733,958 742,958 756,952 771,952 778,944 794,932 802,930 809,926 817,924 825,918 832,920 839,926 847,930 862,938 877,948 899,954 907,958 914,960 923,964 931,964 939,968 952,968 960,960 976,956 989,956 998,952 1010,967 1021,970 1035,980 1044,980 1058,976 1074,974 1113,974 1119,968 1125,964 1134,952 1142,948 1150,944 1157,950 1165,950 1173,954 1187,950 1195,950 1210,954 1226,963 1240,966 1248,966 1261,974 1279,974 1286,970 1293,974 1309,970 1322,982 1330,994 1338,996 1347,996 1354,998 1368,987 1383,973 1391,970 1399,959 1406,952 1414,946 1423,946 1436,950 1445,958 1454,970 1460,983 1466,998 1474,1000 1483,996 1491,988 1497,986 1505,980 1512,970 1520,968 1528,963 1539,950 1550,931`;
const signalLine = `54,993 61,1001 74,1018 82,1026 90,1031 98,1033 106,1033 112,1031 120,1027 136,1019 152,1018 174,1016 188,1010 212,1004 226,997 242,984 250,974 256,969 264,965 272,961 280,959 287,954 294,952 310,954 348,954 370,958 412,958 423,956 430,956 440,959 446,958 454,961 461,965 469,967 484,974 506,974 521,971 537,968 552,966 567,962 582,961 590,958 598,956 612,952 621,952 628,948 634,946 642,945 672,944 680,946 688,948 696,948 711,953 718,954 726,954 733,957 742,957 756,956 771,954 778,952 786,948 794,947 809,939 817,936 825,932 832,930 855,930 869,934 877,938 899,944 907,948 930,954 939,959 952,963 967,960 990,958 998,957 1021,963 1029,964 1037,969 1050,972 1066,974 1118,974 1134,969 1150,961 1165,957 1187,953 1218,954 1231,959 1248,959 1262,964 1279,968 1294,970 1309,970 1324,976 1340,983 1362,988 1372,988 1386,984 1398,978 1406,971 1422,961 1430,960 1446,959 1458,968 1470,975 1480,980 1496,984 1506,982 1520,978 1534,971 1550,959`;
const upperBand = `54,962 61,962 68,960 75,957 92,957 98,958 106,958 112,956 129,956 136,954 143,956 174,956 189,952 196,952 212,948 219,948 234,944 242,940 249,938 256,936 264,936 287,948 363,948 370,946 385,946 392,948 422,948 430,951 446,958 461,966 470,968 476,968 484,970 506,970 514,968 529,968 536,966 552,966 567,964 575,964 590,962 620,962 628,960 658,960 673,964 680,964 688,966 696,964 793,964 803,962 809,962 817,960 900,960 908,958 971,958 979,960 989,962 998,962 1010,966 1018,970 1028,972 1080,972 1088,970 1118,970 1134,967 1150,962 1322,962 1346,968 1362,972 1368,972 1376,970 1386,970 1406,962 1420,956 1454,956 1466,952 1512,952 1520,950 1528,950 1550,944`;
const lowerBand = `54,1002 60,1004 68,1008 75,1013 90,1017 174,1017 180,1018 188,1017 205,1016 226,1012 250,1012 258,1010 272,999 281,988 288,984 312,982 320,985 334,987 348,988 370,988 378,990 385,990 393,992 440,992 454,988 468,988 476,990 520,990 528,992 560,992 567,990 642,990 650,988 660,988 672,983 684,980 694,982 702,983 718,987 740,987 787,987 795,988 850,988 858,990 868,990 877,992 899,992 907,994 922,994 931,996 998,996 1006,994 1075,994 1080,992 1104,992 1112,990 1146,990 1152,992 1194,992 1203,990 1218,990 1226,988 1262,988 1272,990 1320,990 1326,992 1376,992 1384,994 1392,994 1406,998 1454,998 1464,1001 1482,1006 1512,1006 1520,1004 1530,1004 1536,1002 1544,1002 1550,1000`;
const middleBand =
  "M54 982h6l8 3h8M100 986h24M148 986h24M196 985l8-3h8l7-2M248 975l8-3 9-2M289 966l5-2h10l9 3M337 968h24M385 968l7 2h16M432 972h8l12 4M480 980h23M528 980l8-2h15M576 978h9l6-1M625 977h15M670 972h24M718 974h16M813 974h25M862 974l6 3M957 978h23M1005 980l7 2h16M1052 985l14-3h10M1100 981h23M1146 977h12M1340 981l22 1M1388 982l22-2M1434 977h8M1482 978h24M1530 977h8l12-5";

const zeroY = 976;

const add = (parent, name, attrs, text) => {
  const node = document.createElementNS(SVG_NS, name);
  for (const key in attrs) node.setAttribute(key, attrs[key]);
  if (text) node.textContent = text;
  parent.appendChild(node);
};

// Candles
const candleGroup = document.querySelector("#candles");
candles.trim().split(/[;\n]/).forEach((row) => {
  const [x, high, top, bottom, low, color] = row.split(" ");
  add(candleGroup, "rect", { x: x - 1, y: high, width: 2, height: low - high, fill: "#bebebe" });
  add(candleGroup, "rect", { x: x - 3, y: top, width: 6, height: bottom - top, fill: "#bebebe" });
  if (color !== "n") {
    const fill = color === "g" ? "#4fe24f" : "#f06e6e";
    add(candleGroup, "rect", { x: x - 1, y: +top + 2, width: 2, height: bottom - top - 4, fill });
  }
});

// MACD
const macdGroup = document.querySelector("#macd");
const toPoints = (line) => line.split(" ").map((p) => p.split(",").map(Number));
const valueAt = (points, x) => {
  for (let i = 1; i < points.length; i++) {
    const [x0, y0] = points[i - 1];
    const [x1, y1] = points[i];
    if (x <= x1) return y0 + ((y1 - y0) * (x - x0)) / (x1 - x0);
  }
};

let upArea = "";
let downArea = "";
const macdPoints = toPoints(macdLine);
const signalPoints = toPoints(signalLine);
for (let x = 54; x < 1550; x++) {
  const a = Math.round(valueAt(macdPoints, x));
  const b = Math.round(valueAt(signalPoints, x));
  const slice = `M${x} ${a}h1V${b}h-1z`;
  if (a < b) upArea += slice;
  else downArea += slice;
}
add(macdGroup, "path", { d: upArea, fill: "#063c06", "shape-rendering": "crispEdges" });
add(macdGroup, "path", { d: downArea, fill: "#3c0404", "shape-rendering": "crispEdges" });

histogram.split(",").forEach((bar) => {
  const [x, y] = bar.split(" ").map(Number);
  add(macdGroup, "rect", {
    x: x - 2,
    y: Math.min(y, zeroY),
    width: 4,
    height: Math.abs(y - zeroY),
    fill: y < zeroY ? "#4fd24f" : "#e06464",
  });
});

add(macdGroup, "polyline", { points: signalLine, class: "signal-line" });
add(macdGroup, "polyline", { points: macdLine, class: "macd-line" });
add(macdGroup, "polyline", { points: upperBand, class: "band" });
add(macdGroup, "polyline", { points: lowerBand, class: "band-low" });
add(macdGroup, "path", { d: middleBand, class: "band" });
add(macdGroup, "path", { d: `M54 ${zeroY}H1828`, class: "zero" });

// Axis
const axis = document.querySelector("#axis");
const tick = (d, stroke = "#666") => add(axis, "path", { d, stroke, "stroke-width": 2 });

[
  ["24,400", 86], ["", 168], ["24,200", 248], ["24,100", 330], ["24,000", 409], ["23,900", 492],
  ["23,800", 571], ["23,700", 652], ["23,600", 734], ["23,500", 814], ["23,400", 895],
  ["0", 976], ["-100", 1032],
].forEach(([label, y]) => {
  tick(`M1830 ${y}h7`);
  if (label) add(axis, "text", { x: 1842, y: y + 6 }, label);
});
tick("M1830 922h7");
tick("M1830 930h7", "#3333e0");
tick("M1830 948h7", "#4fd24f");
tick("M1830 958h7", "#e06464");

[
  ["02", 174], ["03", 354], ["04", 536], ["05", 718], ["07", 884], ["", 892],
  ["", 1074], ["10", 1254], ["11", 1436], ["12", 1618], ["14", 1784], ["", 1792],
].forEach(([label, x]) => {
  tick(`M${x} 1068v5`);
  if (label) add(axis, "text", { x, y: 1092, "text-anchor": "middle" }, label);
});
```
